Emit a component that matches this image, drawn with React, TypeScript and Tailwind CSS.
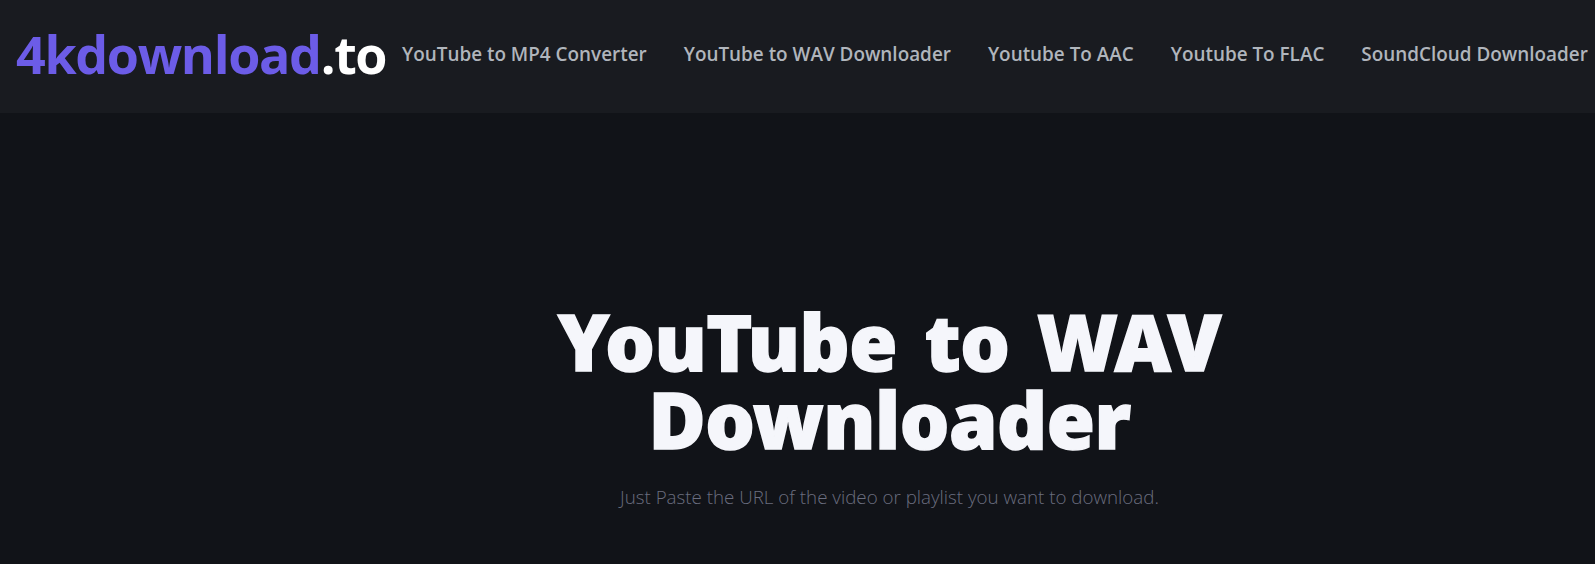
export default function App() {
  const links = ["YouTube to MP4 Converter", "YouTube to WAV Downloader", "Youtube To AAC", "Youtube To FLAC", "SoundCloud Downloader"];
  return (
    <div className="h-[564px] w-[1595px] overflow-hidden bg-[#111318] font-['Open_Sans',sans-serif]">
      <header className="flex h-[113px] items-center bg-[#191b20] pl-4">
        <a className="-mt-[6px] w-[386px] shrink-0 text-[52px] font-bold tracking-[-1.35px] text-[#6c5ce7]">
          4kdownload<span className="text-white">.to</span>
        </a>
        <nav className="-mt-[5px] flex gap-[37px] whitespace-nowrap">
          {links.map((l) => (
            <a key={l} className="text-[18.9px] font-semibold text-[#b0b5bc]">{l}</a>
          ))}
        </nav>
      </header>
      <main className="flex flex-col items-center pt-[189px] pl-[184px]">
        <h1 className="w-[800px] text-center font-['Noto_Sans',sans-serif] text-[78px] leading-[78px] font-black tracking-[-0.5px] [word-spacing:8px] text-[#f5f6fb] [-webkit-text-stroke:1.5px_#f5f6fb]">
          YouTube to WAV Downloader
        </h1>
        <p className="mt-[25px] text-[18.75px] font-light text-[#6a6d7f]">
          Just Paste the URL of the video or playlist you want to download.
        </p>
      </main>
    </div>
  );
}
